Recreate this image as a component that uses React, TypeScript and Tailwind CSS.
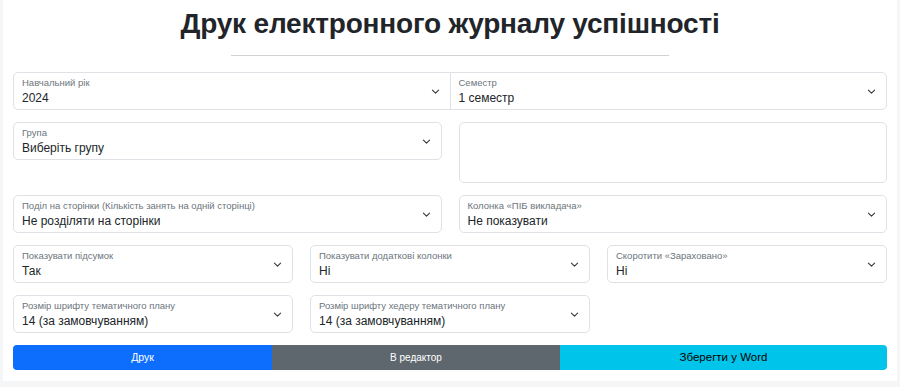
import React from "react";

const Chevron = () => (
  <svg width="9" height="9" viewBox="0 0 16 16" className="shrink-0 text-[#343a40]" fill="none">
    <path d="M2.5 5.5l5.5 5.5 5.5-5.5" stroke="currentColor" strokeWidth="2" strokeLinecap="round" strokeLinejoin="round" />
  </svg>
);

function Select({ label, value, className = "" }: { label: string; value: string; className?: string }) {
  return (
    <div className={"flex h-[38px] items-center justify-between border border-[#dee2e6] bg-white pl-[8px] pr-[10px] " + className}>
      <div className="flex flex-col leading-none">
        <span className="text-[9.5px] text-[#6c757d]">{label}</span>
        <span className="mt-[4px] text-[12px] text-[#212529]">{value}</span>
      </div>
      <Chevron />
    </div>
  );
}

export default function App() {
  return (
    <div className="min-h-[387px] bg-[#f5f6f7] px-[3px] font-['Liberation_Sans',Arial,sans-serif]">
      <div className="bg-white px-[10px] pb-[11px]">
        <h1 className="pt-[4px] text-center text-[28px] font-bold leading-[40px] tracking-[-0.2px] text-[#212529]">
          Друк електронного журналу успішності
        </h1>
        <div className="mx-auto mt-[11px] h-px w-[438px] bg-[#d0d3d6]" />
        <div className="mt-[16px] flex">
          <Select label="Навчальний рік" value="2024" className="flex-1 rounded-l-[5px]" />
          <Select label="Семестр" value="1 семестр" className="-ml-px flex-1 rounded-r-[5px]" />
        </div>
        <div className="mt-[12px] grid grid-cols-2 items-start gap-x-[17px] gap-y-[12px]">
          <Select label="Група" value="Виберіть групу" className="rounded-[5px]" />
          <div className="h-[61px] rounded-[5px] border border-[#dee2e6] bg-white" />
          <Select label="Поділ на сторінки (Кількість занять на одній сторінці)" value="Не розділяти на сторінки" className="rounded-[5px]" />
          <Select label="Колонка «ПІБ викладача»" value="Не показувати" className="rounded-[5px]" />
        </div>
        <div className="mt-[12px] grid grid-cols-3 gap-x-[17px] gap-y-[12px]">
          <Select label="Показувати підсумок" value="Так" className="rounded-[5px]" />
          <Select label="Показувати додаткові колонки" value="Ні" className="rounded-[5px]" />
          <Select label="Скоротити «Зараховано»" value="Ні" className="rounded-[5px]" />
          <Select label="Розмір шрифту тематичного плану" value="14 (за замовчуванням)" className="rounded-[5px]" />
          <Select label="Розмір шрифту хедеру тематичного плану" value="14 (за замовчуванням)" className="rounded-[5px]" />
        </div>
        <div className="mt-[12px] flex h-[25px] text-[10.5px]">
          <button className="w-[259px] rounded-l-[4px] bg-[#0d6efd] text-white">Друк</button>
          <button className="w-[288px] bg-[#5f676e] text-[10px] text-white">В редактор</button>
          <button className="flex-1 rounded-r-[4px] bg-[#00c4ea] text-[11.5px] text-black">Зберегти у Word</button>
        </div>
      </div>
    </div>
  );
}
